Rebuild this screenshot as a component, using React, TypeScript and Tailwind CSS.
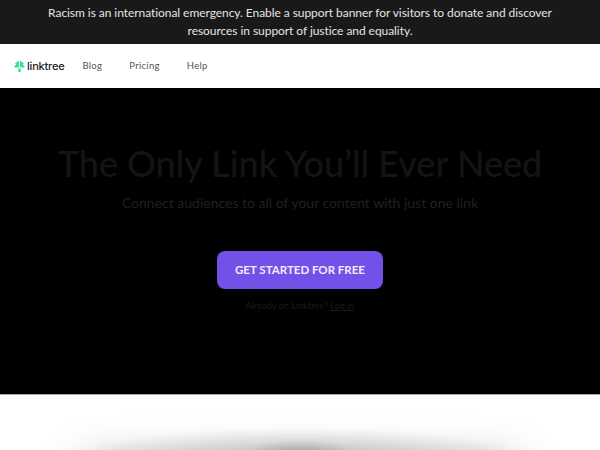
export default function App() {
  return (
    <div className="h-[450px] w-[600px] overflow-hidden bg-white font-['Lato','Noto_Sans',sans-serif]">
      <div className="flex h-[44px] flex-col items-center justify-center bg-[#191919] text-center text-[12px] leading-[18px] tracking-[-0.06px] text-[#e4e4e4]">
        <p>Racism is an international emergency. Enable a support banner for visitors to donate and discover</p>
        <p>resources in support of justice and equality.</p>
      </div>

      <nav className="flex h-[44px] items-center bg-white pl-[14px]">
        <div className="flex items-center gap-[2px]">
          <svg width="11" height="11" viewBox="0 0 11 11" fill="#39e09b">
            <path d="M0 5.6 L2.2 3.4 L1 2.6 L4.4 0 H5 V6.6 H1 Z" />
            <path d="M11 5.6 L8.8 3.4 L10 2.6 L6.6 0 H6 V6.6 H10 Z" />
            <path d="M4.3 7.4 H6.7 V11 H4.3 Z" />
          </svg>
          <span className="font-['Inter',sans-serif] text-[11px] font-medium tracking-[-0.2px] text-[#222]">linktree</span>
        </div>
        <div className="ml-[18px] flex gap-[27px] text-[9.5px] tracking-[0.3px] text-[#555]">
          <a>Blog</a>
          <a>Pricing</a>
          <a>Help</a>
        </div>
      </nav>

      <section className="flex h-[306px] flex-col items-center bg-black pt-[53px]">
        <h1 className="text-[36px] leading-[44px] font-medium text-[#141414]">The Only Link You’ll Ever Need</h1>
        <p className="mt-[8px] text-[14px] leading-[20px] text-[#1d2025]">Connect audiences to all of your content with just one link</p>
        <button className="mt-[38px] h-[38px] w-[166px] rounded-[8px] bg-[#7251e8] text-[11.5px] font-bold text-[#f1edfd]">
          GET STARTED FOR FREE
        </button>
        <p className="mt-[10px] text-[9.2px] leading-[14px] text-[#1a1a1a]">
          Already on Linktree? <a className="underline">Log in</a>
        </p>
      </section>

      <div className="h-px bg-[#aaa]" />

      <section className="h-[55px] overflow-hidden bg-white bg-[radial-gradient(ellipse_60px_20px_at_50%_100%,rgba(0,0,0,0.22),rgba(0,0,0,0)),radial-gradient(ellipse_230px_32px_at_50%_100%,rgba(0,0,0,0.22),rgba(0,0,0,0))] pt-[64px]">
        <div className="mx-auto h-[100px] w-[440px] shadow-[0_0_44px_rgba(0,0,0,0.22)]" />
      </section>
    </div>
  );
}
